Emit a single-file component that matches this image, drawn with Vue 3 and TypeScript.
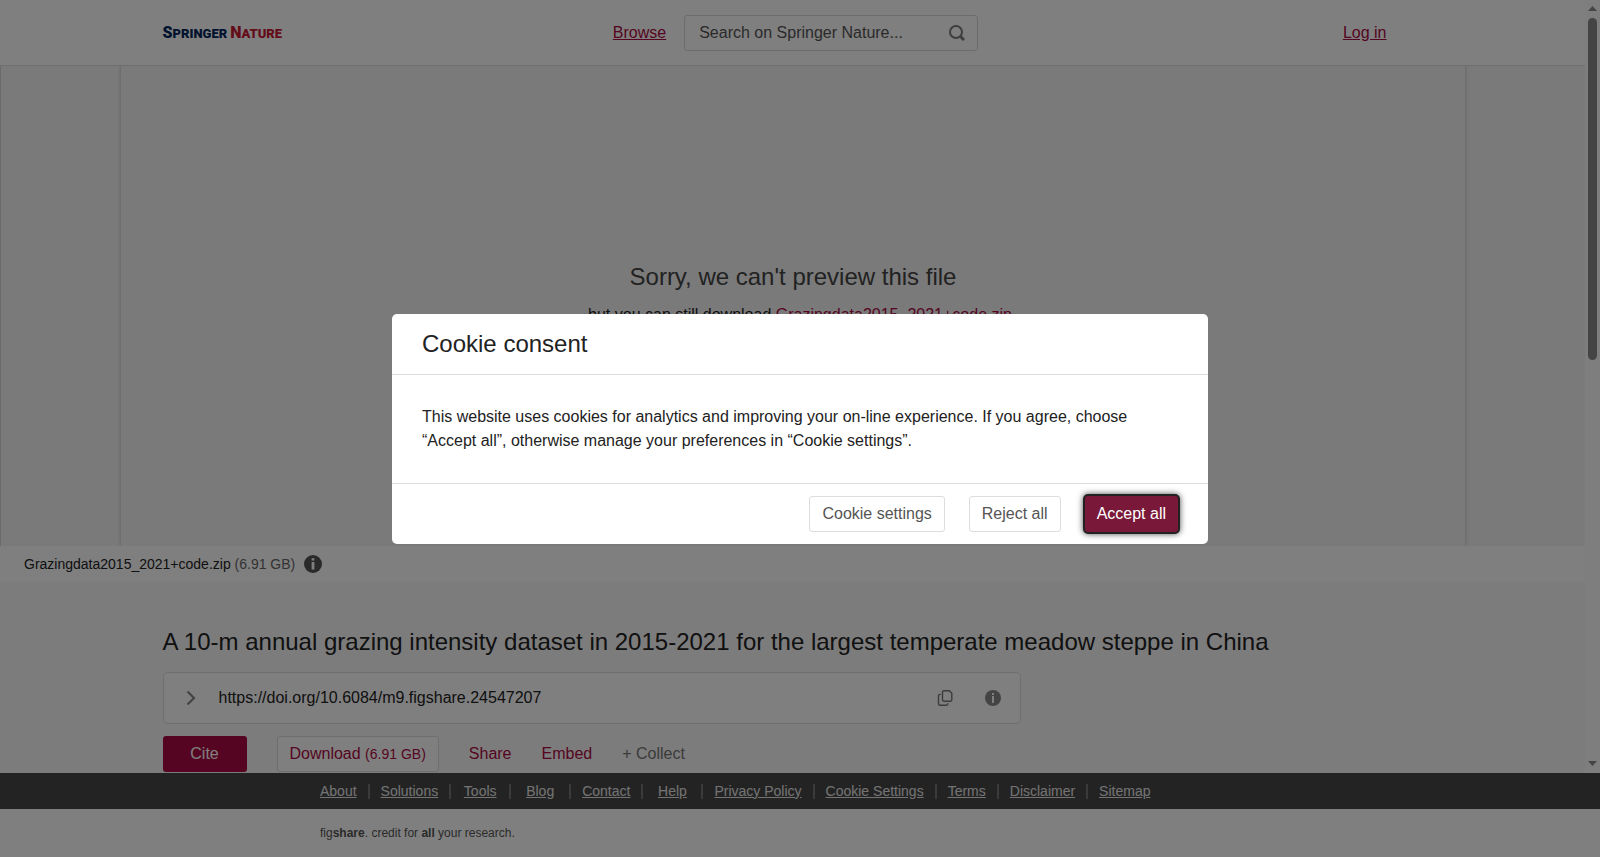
<script setup lang="ts">
import { ref } from 'vue'

interface FooterLink {
  label: string
  href: string
}

const query = ref<string>('')
const fileName = 'Grazingdata2015_2021+code.zip'
const fileSize = '(6.91 GB)'

const footerLinks: FooterLink[] = [
  { label: 'About', href: '#about' },
  { label: 'Solutions', href: '#solutions' },
  { label: 'Tools', href: '#tools' },
  { label: 'Blog', href: '#blog' },
  { label: 'Contact', href: '#contact' },
  { label: 'Help', href: '#help' },
  { label: 'Privacy Policy', href: '#privacy' },
  { label: 'Cookie Settings', href: '#cookies' },
  { label: 'Terms', href: '#terms' },
  { label: 'Disclaimer', href: '#disclaimer' },
  { label: 'Sitemap', href: '#sitemap' },
]
</script>

<template>
  <div class="page">
    <div class="viewport">
      <div class="content">
        <header class="topbar">
          <div class="container topbar-inner">
            <a class="logo" href="#home" aria-label="Springer Nature">
              <span class="springer"><b>S</b>PRINGER</span>
              <span class="nature"><b>N</b>ATURE</span>
            </a>
            <div class="topbar-center">
              <a class="link" href="#browse">Browse</a>
              <form class="search" role="search" @submit.prevent>
                <input
                  v-model="query"
                  type="text"
                  aria-label="Search on Springer Nature"
                  placeholder="Search on Springer Nature..."
                />
                <button type="submit" aria-label="Search">
                  <svg width="16" height="16" viewBox="0 0 16 16" fill="none" stroke="#7c7c7c" stroke-width="2">
                    <circle cx="7" cy="7" r="6" />
                    <path d="M11 11l4 4" stroke-width="3" />
                  </svg>
                </button>
              </form>
            </div>
            <a class="link login" href="#login">Log in</a>
          </div>
        </header>

        <section class="preview">
          <div class="preview-pane">
            <h2>Sorry, we can't preview this file</h2>
            <p>but you can still download <a href="#file">{{ fileName }}</a></p>
          </div>
        </section>

        <div class="filebar">
          <span>{{ fileName }} <span class="size">{{ fileSize }}</span></span>
          <button class="icon-button" type="button" aria-label="File information">
            <svg width="18" height="18" viewBox="0 0 18 18">
              <circle cx="9" cy="9" r="9" fill="#555" />
              <path d="M7.6 3.2h2.8v2.2H7.6zM7.6 7h2.8v7.6H7.6z" fill="#fff" />
            </svg>
          </button>
        </div>

        <main class="container details">
          <h1>A 10-m annual grazing intensity dataset in 2015-2021 for the largest temperate meadow steppe in China</h1>
          <div class="doi">
            <button class="icon-button" type="button" aria-label="Expand citation">
              <svg width="10" height="16" viewBox="0 0 10 16" fill="none" stroke="#888" stroke-width="2.200">
                <path d="M1.5 1.5L8 8l-6.5 6.5" />
              </svg>
            </button>
            <span class="doi-text">https://doi.org/10.6084/m9.figshare.24547207</span>
            <button class="icon-button" type="button" aria-label="Copy DOI">
              <svg width="16" height="16" viewBox="0 0 16 16" fill="none" stroke="#777" stroke-width="1.4">
                <path d="M7 .7h5.300l2.500 2.500v6.600a1.500 1.500 0 0 1-1.500 1.500H7a1.500 1.500 0 0 1-1.500-1.500V2.200A1.500 1.500 0 0 1 7 .7z" />
                <path d="M3.800 4.400h-.8A1.500 1.500 0 0 0 1.500 5.900v7.900A1.500 1.500 0 0 0 3 15.300h6.300a1.500 1.500 0 0 0 1.500-1.500v-.6" />
              </svg>
            </button>
            <button class="icon-button" type="button" aria-label="DOI information">
              <svg width="16" height="16" viewBox="0 0 16 16">
                <circle cx="8" cy="8" r="8" fill="#888" />
                <path d="M7 3h2v2H7zM7 6h2v7H7z" fill="#fff" />
              </svg>
            </button>
          </div>
          <div class="actions">
            <button class="cite" type="button">Cite</button>
            <button class="download" type="button">Download <small>{{ fileSize }}</small></button>
            <button class="plain" type="button">Share</button>
            <button class="plain" type="button">Embed</button>
            <button class="plain muted" type="button">+ Collect</button>
          </div>
        </main>
      </div>

      <div class="scrollbar" aria-hidden="true">
        <svg width="9" height="5" viewBox="0 0 9 5"><path d="M0 5L4.500 0 9 5z" fill="#888" /></svg>
        <div class="track"><div class="thumb"></div></div>
        <svg width="9" height="5" viewBox="0 0 9 5"><path d="M0 0l4.500 5L9 0z" fill="#888" /></svg>
      </div>
    </div>

    <footer>
      <nav aria-label="Footer">
        <ul>
          <li v-for="item in footerLinks" :key="item.label">
            <a :href="item.href">{{ item.label }}</a>
          </li>
        </ul>
      </nav>
      <p class="tagline">fig<b>share</b>. credit for <b>all</b> your research.</p>
    </footer>

    <div class="overlay">
      <div class="modal" role="dialog" aria-modal="true" aria-labelledby="consent-title">
        <h2 id="consent-title">Cookie consent</h2>
        <p>
          This website uses cookies for analytics and improving your on-line experience. If you agree, choose “Accept
          all”, otherwise manage your preferences in “Cookie settings”.
        </p>
        <div class="modal-actions">
          <button type="button">Cookie settings</button>
          <button type="button">Reject all</button>
          <button class="accept" type="button">Accept all</button>
        </div>
      </div>
    </div>
  </div>
</template>

<style>
body {
  margin: 0;
}
</style>

<style scoped>
.page {
  display: flex;
  flex-direction: column;
  height: 100vh;
  font: 16px/24px 'Liberation Sans', Arial, sans-serif;
  color: #222;
  background: #fff;
}
h1,
h2,
p,
ul {
  margin: 0;
  padding: 0;
}
h1,
h2 {
  font-size: 24px;
  line-height: 30px;
  font-weight: 400;
}
button,
input {
  box-sizing: border-box;
  font: inherit;
  color: inherit;
}
svg {
  display: block;
}
.viewport {
  display: flex;
  flex: 1;
  min-height: 0;
}
.content {
  flex: 1;
  min-width: 0;
  overflow: hidden;
  background: #f9f9f9;
}
.container {
  max-width: 1260px;
  margin: 0 auto;
}
.topbar {
  background: #fff;
  border-bottom: 1px solid #ddd;
}
.topbar-inner {
  display: grid;
  grid-template-columns: 1fr auto 1fr;
  align-items: center;
  height: 65px;
}
.logo {
  display: flex;
  align-items: baseline;
  gap: 3px;
  padding-top: 2px;
  font: 900 13px/20px Roboto, 'Open Sans', sans-serif;
  text-decoration: none;
}
.logo b {
  font-size: 16px;
  font-weight: 900;
}
.springer {
  color: #01265c;
}
.nature {
  color: #c81a34;
}
.topbar-center {
  display: flex;
  align-items: center;
  gap: 18px;
  padding-left: 6px;
}
.link {
  color: #ab0a42;
  text-decoration: underline;
}
.login {
  justify-self: end;
  margin-right: 36px;
}
.search {
  box-sizing: border-box;
  display: flex;
  align-items: center;
  width: 294px;
  height: 36px;
  padding: 0 12px 0 14px;
  border: 1px solid #d8d8d8;
  border-radius: 3px;
}
.search input {
  flex: 1;
  min-width: 0;
  padding: 0;
  border: 0;
  outline: 0;
  background: none;
}
.search input::placeholder {
  color: #555;
  opacity: 1;
}
.search button,
.icon-button {
  flex: none;
  padding: 0;
  border: 0;
  background: none;
}
.preview {
  box-sizing: border-box;
  height: 480px;
  padding: 0 120px;
  overflow: hidden;
  border-left: 1px solid #d5d5d5;
  background: #f5f5f5;
}
.preview-pane {
  box-sizing: border-box;
  height: 100%;
  padding-top: 196px;
  text-align: center;
  box-shadow: 0 0 4px rgba(0, 0, 0, 0.25);
}
.preview h2 {
  margin-bottom: 11px;
  color: #444;
}
.preview p {
  padding-left: 14px;
}
.preview a {
  color: #ab0a42;
  text-decoration: none;
}
.filebar {
  display: flex;
  align-items: center;
  gap: 9px;
  height: 36px;
  padding: 0 24px;
  font-size: 14px;
  background: #fff;
}
.filebar .size {
  color: #666;
}
.details {
  padding-top: 45px;
}
.doi {
  box-sizing: border-box;
  display: flex;
  align-items: center;
  max-width: 858px;
  height: 52px;
  margin: 15px 0 12px;
  padding: 0 19px 0 22px;
  gap: 32px;
  border: 1px solid #ddd;
  border-radius: 5px;
  background: #fff;
}
.doi-text {
  flex: 1;
  margin-left: -9px;
}
.actions {
  display: flex;
  align-items: center;
  gap: 30px;
}
.actions button {
  height: 36px;
  padding: 0;
  border: 0;
  border-radius: 3px;
  color: #ab0a42;
  background: none;
}
.actions .cite {
  width: 84px;
  color: #fff;
  background: #ab0a42;
}
.actions .download {
  padding: 0 12px;
  border: 1px solid #ddd;
  background: #fff;
}
.download small {
  font-size: 14px;
}
.actions .muted {
  color: #777;
}
.scrollbar {
  box-sizing: border-box;
  display: flex;
  flex-direction: column;
  align-items: center;
  gap: 7px;
  width: 15px;
  padding: 6px 0 7px;
  background: #fcfcfc;
}
.track {
  flex: 1;
}
.thumb {
  width: 9px;
  height: 46.5%;
  border-radius: 5px;
  background: #888;
}
nav {
  padding: 0 309px;
  font-size: 14px;
  background: #464646;
}
ul {
  display: flex;
  align-items: center;
  height: 36px;
  list-style: none;
}
li {
  box-sizing: border-box;
  flex: none;
  min-width: 60px;
  padding: 0 11px;
  border-right: 2px solid #747474;
  line-height: 15px;
  text-align: center;
}
li:last-child {
  border: 0;
}
li a {
  color: #e6e6e6;
}
.tagline {
  padding: 12px 320px;
  font-size: 12px;
  color: #555;
}
.overlay {
  position: fixed;
  inset: 0;
  display: grid;
  place-items: center;
  background: rgba(0, 0, 0, 0.5);
}
.modal {
  width: min(816px, 90%);
  border-radius: 5px;
  background: #fff;
}
.modal h2 {
  padding: 15px 30px;
}
.modal p {
  padding: 30px;
  border: 1px solid #ddd;
  border-width: 1px 0;
}
.modal-actions {
  display: flex;
  justify-content: flex-end;
  gap: 24px;
  padding: 12px 30px;
}
.modal-actions button {
  height: 36px;
  padding: 0 12px;
  border: 1px solid #ddd;
  border-radius: 3px;
  color: #555;
  background: #fff;
}
.modal-actions .accept {
  border: 0;
  color: #fff;
  background: #7a1839;
  box-shadow:
    0 0 0 2px #222,
    0 0 6px 2px rgba(0, 0, 0, 0.7);
}
</style>
